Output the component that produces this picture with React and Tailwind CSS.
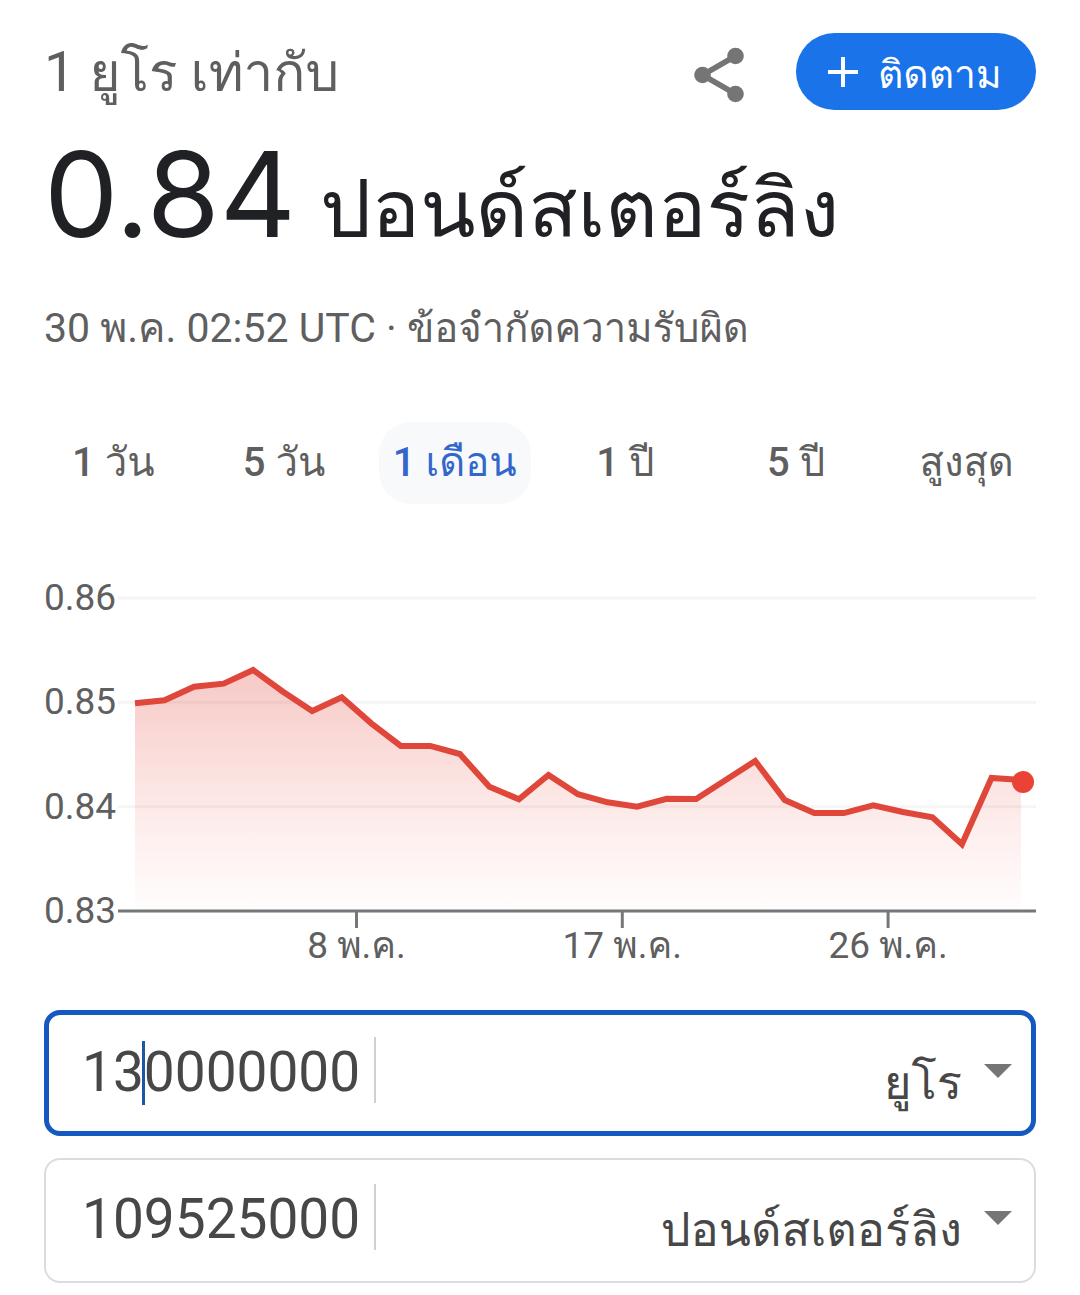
import React, { useState } from 'react';

const ranges = [
  { id: '1d', label: '1 วัน' },
  { id: '5d', label: '5 วัน' },
  { id: '1m', label: '1 เดือน' },
  { id: '1y', label: '1 ปี' },
  { id: '5y', label: '5 ปี' },
  { id: 'max', label: 'สูงสุด' },
];

const currencies = [
  { code: 'EUR', name: 'ยูโร' },
  { code: 'GBP', name: 'ปอนด์สเตอร์ลิง' },
];

const rates = [
  0.84991, 0.8502, 0.8515, 0.85179, 0.8531, 0.85104, 0.84917, 0.85048, 0.84799, 0.84582, 0.84582,
  0.84505, 0.84191, 0.84071, 0.84304, 0.84119, 0.84042, 0.84, 0.84076, 0.84074, 0.84256, 0.84438,
  0.84064, 0.83939, 0.83939, 0.84013, 0.83949, 0.83898, 0.83639, 0.84275, 0.84256,
];

const gridValues = [0.86, 0.85, 0.84];

// index = position in the rates array
const dateTicks = [
  { index: 7.5, label: '8 พ.ค.' },
  { index: 16.5, label: '17 พ.ค.' },
  { index: 25.5, label: '26 พ.ค.' },
];

const PLOT_LEFT = 91;
const PLOT_RIGHT = 977;
const BASE_Y = 335;

const xAt = (i) => PLOT_LEFT + (i * (PLOT_RIGHT - PLOT_LEFT)) / (rates.length - 1);
const yAt = (v) => BASE_Y - (v - 0.83) * 10433;

const ShareIcon = () => (
  <svg viewBox="0 0 50 56" className="h-14 w-[50px]" fill="#757575" aria-hidden="true">
    <path d="M41.5 9 L8.5 28 L41.5 47" fill="none" stroke="#757575" strokeWidth="5.5" />
    <circle cx="41.5" cy="9" r="8.3" />
    <circle cx="8.5" cy="28" r="8.3" />
    <circle cx="41.5" cy="47" r="8.3" />
  </svg>
);

const RateChart = () => {
  const points = rates.map((v, i) => `${xAt(i)},${yAt(v)}`).join(' ');

  return (
    <svg viewBox="0 0 992 400" className="w-full" role="img" aria-label="EUR / GBP">
      <defs>
        <linearGradient id="area" gradientUnits="userSpaceOnUse" x1="0" y1="94" x2="0" y2={BASE_Y}>
          <stop offset="0" stopColor="#e0453a" stopOpacity="0.29" />
          <stop offset="0.65" stopColor="#ea4335" stopOpacity="0.09" />
          <stop offset="1" stopColor="#ea4335" stopOpacity="0.01" />
        </linearGradient>
      </defs>

      {gridValues.map((v) => (
        <g key={v}>
          <line x1="74" x2="992" y1={yAt(v)} y2={yAt(v)} stroke="#f5f5f5" strokeWidth="3" />
          <text x="0" y={yAt(v) + 12} fontSize="37" fill="#5f5f5f">
            {v.toFixed(2)}
          </text>
        </g>
      ))}
      <text x="0" y={BASE_Y + 12} fontSize="37" fill="#5f5f5f">
        0.83
      </text>

      <polygon points={`${PLOT_LEFT},${BASE_Y} ${points} ${PLOT_RIGHT},${BASE_Y}`} fill="url(#area)" />
      <line x1="74" x2="992" y1={BASE_Y} y2={BASE_Y} stroke="#757779" strokeWidth="3" />

      {dateTicks.map((t) => (
        <g key={t.label}>
          <line x1={xAt(t.index)} x2={xAt(t.index)} y1={BASE_Y} y2={BASE_Y + 17} stroke="#757779" strokeWidth="3" />
          <text x={xAt(t.index)} y={BASE_Y + 47} fontSize="37" textAnchor="middle" fill="#5f5f5f">
            {t.label}
          </text>
        </g>
      ))}

      <polyline points={points} fill="none" stroke="#df473a" strokeWidth="6" />
      <circle cx={PLOT_RIGHT + 2} cy={yAt(rates[rates.length - 1]) + 2} r="11" fill="#ea4335" />
    </svg>
  );
};

const AmountRow = ({ id, value, onChange, currency, onCurrency, active }) => (
  <div
    className={
      active
        ? 'flex h-[126px] items-start rounded-2xl border-5 border-[#1558c0] pt-[22px] pr-[19px] pl-[33px]'
        : 'flex h-[125px] items-start rounded-2xl border-2 border-[#dadce0] pt-6 pr-[22px] pl-9'
    }
  >
    <div className="relative flex h-[66px] w-[294px] shrink-0 items-center border-r-2 border-[#d0d0d0] pt-1">
      <input
        id={id}
        aria-label="จำนวน"
        inputMode="decimal"
        value={value}
        onChange={(e) => onChange(e.target.value)}
        className="w-full text-[55px] leading-[66px] text-[#474747] outline-none"
      />
      {active && <span className="absolute top-1 left-[60px] h-16 w-[3px] bg-[#1f55a5]" />}
    </div>
    <div className="relative min-w-0 flex-1">
      <select
        aria-label="สกุลเงิน"
        value={currency}
        onChange={(e) => onCurrency(e.target.value)}
        className="h-[92px] w-full appearance-none pr-[50px] text-right text-[47px] text-[#474747] outline-none"
      >
        {currencies.map((c) => (
          <option key={c.code} value={c.code}>
            {c.name}
          </option>
        ))}
      </select>
      <svg
        viewBox="0 0 28 14"
        className="pointer-events-none absolute top-[27px] right-0 h-3.5 w-7"
        fill="#757575"
        aria-hidden="true"
      >
        <path d="M0 0 H28 L14 14 Z" />
      </svg>
    </div>
  </div>
);

const App = () => {
  const [range, setRange] = useState('1m');
  const [from, setFrom] = useState('130000000');
  const [to, setTo] = useState('109525000');
  const [fromCurrency, setFromCurrency] = useState('EUR');
  const [toCurrency, setToCurrency] = useState('GBP');

  return (
    <main className="bg-white pb-3 font-[Roboto,Loma,sans-serif] text-[#5f5f5f]">
      <header className="flex items-start justify-between px-11 pt-[33px]">
        <p className="text-[56px] leading-[78px]">
          1 <span className="text-[53px]">ยูโร เท่ากับ</span>
        </p>
        <div className="flex items-start gap-[52px]">
          <button type="button" aria-label="แชร์" className="pt-[14px]">
            <ShareIcon />
          </button>
          <button
            type="button"
            className="flex h-[77px] w-60 items-center gap-5 rounded-full bg-[#1a73e8] pl-8 text-[39px] text-white"
          >
            <svg viewBox="0 0 30 30" className="size-[30px]" stroke="currentColor" strokeWidth="4" aria-hidden="true">
              <path d="M15 0 V30 M0 15 H30" />
            </svg>
            <span className="pt-2">ติดตาม</span>
          </button>
        </div>
      </header>

      <h1 className="px-11 text-[81px] leading-[164px] text-[#202124]">
        <span className="mr-1 font-[Inter] text-[118px]">0.84</span> ปอนด์สเตอร์ลิง
      </h1>

      <p className="px-11 pt-2 text-[41px] leading-[56px]">
        30 พ.ค. 02:52 UTC ·{' '}
        <a href="#disclaimer" className="text-[40px]">
          ข้อจำกัดความรับผิด
        </a>
      </p>

      <div className="grid grid-cols-6 justify-items-center px-7 pt-[65px]">
        {ranges.map((r) => (
          <button
            key={r.id}
            type="button"
            onClick={() => setRange(r.id)}
            className={
              r.id === range
                ? 'h-[82px] rounded-[32px] bg-[#f8f9fb] px-3.5 text-[40px] font-medium text-[#3367cc]'
                : 'h-[82px] rounded-[32px] px-3.5 text-[40px] font-medium'
            }
          >
            {r.label}
          </button>
        ))}
      </div>

      <div className="px-11 pt-[72px]">
        <RateChart />
      </div>

      <div className="flex flex-col gap-[22px] px-11 pt-[34px]">
        <AmountRow
          id="from"
          value={from}
          onChange={setFrom}
          currency={fromCurrency}
          onCurrency={setFromCurrency}
          active
        />
        <AmountRow id="to" value={to} onChange={setTo} currency={toCurrency} onCurrency={setToCurrency} />
      </div>
    </main>
  );
};

export default App;
